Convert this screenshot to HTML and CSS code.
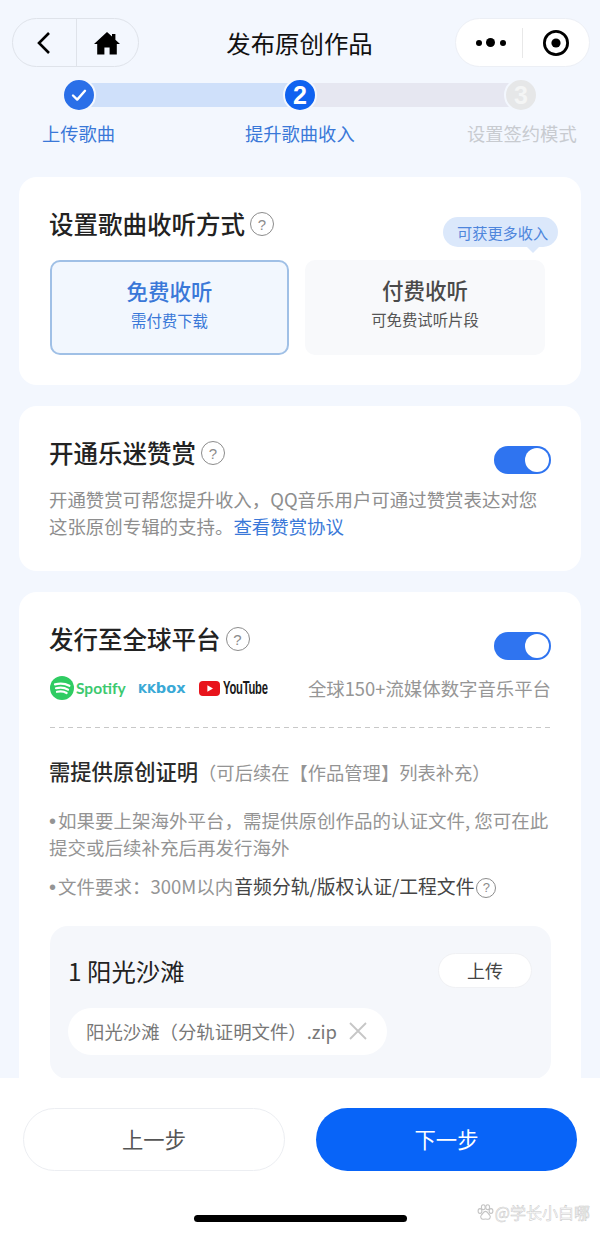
FILE: index.html
```html
<!DOCTYPE html>
<html lang="zh-CN">
<head>
<meta charset="utf-8">
<title>发布原创作品</title>
<link rel="stylesheet" href="styles.css">
</head>
<body>
<div class="screen">
  <div class="main">
    <header class="nav">
      <div class="capsule capsule-left">
        <button class="cap-btn cap-back" aria-label="返回">
          <svg width="16" height="24" viewBox="0 0 16 24"><path d="M13 2 L3 12 L13 22" fill="none" stroke="#000" stroke-width="2.6"/></svg>
        </button>
        <button class="cap-btn cap-home" aria-label="首页">
          <svg width="26" height="24" viewBox="0 0 26 24"><path d="M13 1 L18 5.6 V3 H21.4 V8.8 L26 13 H22.8 V23.5 H15.6 V16.5 H10.4 V23.5 H3.2 V13 H0 Z" fill="#000"/></svg>
        </button>
      </div>
      <h1 class="nav-title">发布原创作品</h1>
      <div class="capsule capsule-right">
        <span class="dots"><i class="dot"></i><i class="dot dot-big"></i><i class="dot"></i></span>
        <span class="cap-sep"></span>
        <svg width="28" height="28" viewBox="0 0 28 28"><circle cx="14" cy="14" r="11.6" fill="none" stroke="#000" stroke-width="2.8"/><circle cx="14" cy="14" r="4.6" fill="#000"/></svg>
      </div>
    </header>

    <section class="steps">
      <div class="track">
        <span class="bar bar-done"></span>
        <span class="bar bar-todo"></span>
        <span class="node node-blue node-1">
          <svg width="18" height="18" viewBox="0 0 18 18"><path d="M3 9.5 L7.2 13.6 L15 4.8" fill="none" stroke="#fff" stroke-width="2.4" stroke-linecap="round" stroke-linejoin="round"/></svg>
        </span>
        <span class="node node-blue node-2">2</span>
        <span class="node node-grey node-3">3</span>
      </div>
      <div class="step-labels">
        <span class="step-label step-on">上传歌曲</span>
        <span class="step-label step-on">提升歌曲收入</span>
        <span class="step-label step-off">设置签约模式</span>
      </div>
    </section>

    <section class="card card-listen">
      <div class="head">
        <h2 class="h2">设置歌曲收听方式</h2>
        <span class="help">?</span>
      </div>
      <span class="tip">可获更多收入</span>
      <div class="options">
        <div class="option option-on">
          <div class="opt-title">免费收听</div>
          <div class="opt-sub">需付费下载</div>
        </div>
        <div class="option option-off">
          <div class="opt-title">付费收听</div>
          <div class="opt-sub">可免费试听片段</div>
        </div>
      </div>
    </section>

    <section class="card card-tip">
      <div class="head-row">
        <div class="head">
          <h2 class="h2">开通乐迷赞赏</h2>
          <span class="help">?</span>
        </div>
        <span class="toggle"><i class="knob"></i></span>
      </div>
      <div class="desc">
        <div class="line">开通赞赏可帮您提升收入，QQ音乐用户可通过赞赏表达对您</div>
        <div class="line"><span>这张原创专辑的支持。</span><a class="link">查看赞赏协议</a></div>
      </div>
    </section>

    <section class="card card-global">
      <div class="head-row">
        <div class="head">
          <h2 class="h2">发行至全球平台</h2>
          <span class="help">?</span>
        </div>
        <span class="toggle"><i class="knob"></i></span>
      </div>
      <div class="platforms">
        <div class="logos">
          <span class="logo logo-spotify">
            <svg width="24" height="24" viewBox="0 0 24 24"><circle cx="12" cy="12" r="12" fill="#2fcc62"/><path d="M5 8.4 C10 7 15 7.4 19.4 9.8 M6 12.2 C10 11.1 14.6 11.5 18 13.6 M7 15.8 C10.4 15 13.8 15.3 16.6 17" fill="none" stroke="#fff" stroke-width="2.2" stroke-linecap="round"/></svg>
            <span class="spotify-word">Spotify</span>
          </span>
          <span class="logo logo-kkbox"><span class="kk">KK</span><span>box</span></span>
          <span class="logo logo-yt">
            <svg width="21" height="15" viewBox="0 0 24 17"><rect width="24" height="17" rx="4.5" fill="#e8141c"/><path d="M9.6 4.8 L16 8.5 L9.6 12.2 Z" fill="#fff"/></svg>
            <span class="yt-word">YouTube</span>
          </span>
        </div>
        <span class="platform-text">全球150+流媒体数字音乐平台</span>
      </div>
      <div class="dash"></div>
      <div class="proof-title"><strong>需提供原创证明</strong><span class="proof-note">（可后续在【作品管理】列表补充）</span></div>
      <div class="note note-first">
        <div class="line"><span class="bullet">•</span><span>如果要上架海外平台，需提供原创作品的认证文件, 您可在此</span></div>
        <div class="line">提交或后续补充后再发行海外</div>
      </div>
      <div class="note note-req"><span class="bullet">•</span><span>文件要求：300M以内</span><span class="note-dark">音频分轨/版权认证/工程文件</span><span class="help help-small">?</span></div>
      <div class="song">
        <div class="song-row">
          <span class="song-name">1 阳光沙滩</span>
          <span class="upload">上传</span>
        </div>
        <div class="file">
          <span class="file-name">阳光沙滩（分轨证明文件）.zip</span>
          <svg width="18" height="18" viewBox="0 0 18 18"><path d="M1 1 L17 17 M17 1 L1 17" stroke="#c6c6c6" stroke-width="1.8" fill="none"/></svg>
        </div>
      </div>
    </section>
  </div>

  <footer class="footer">
    <div class="actions">
      <button class="btn btn-prev">上一步</button>
      <button class="btn btn-next">下一步</button>
    </div>
    <div class="home-bar"></div>
    <span class="watermark">
      <svg width="17" height="17" viewBox="0 0 17 17"><g fill="#fff" stroke="#c4c4c4" stroke-width="1.1"><ellipse cx="3" cy="7" rx="1.9" ry="2.4"/><ellipse cx="6.3" cy="3.2" rx="1.9" ry="2.4"/><ellipse cx="10.7" cy="3.2" rx="1.9" ry="2.4"/><ellipse cx="14" cy="7" rx="1.9" ry="2.4"/><path d="M8.5 7.4 C6.6 7.4 5.8 9.6 4.4 11 C2.8 12.8 4.2 15.6 6.6 15.2 C7.8 15 9.2 15 10.4 15.2 C12.8 15.6 14.2 12.8 12.6 11 C11.2 9.6 10.4 7.4 8.5 7.4 Z"/></g></svg>
      <span class="wm-text">@学长小白哪</span>
    </span>
  </footer>
</div>
</body>
</html>
```
FILE: styles.css
```css
* { box-sizing: border-box; }
html, body { margin: 0; padding: 0; }
body {
  width: 600px;
  height: 1234px;
  overflow: hidden;
  font-family: "Noto Sans CJK SC", "Noto Sans", sans-serif;
  background: #f3f7fe;
  color: #1c1c1c;
}
.screen { display: flex; flex-direction: column; height: 1234px; }
.main { height: 1078px; overflow: hidden; padding: 18px 19px 0; flex: none; }

/* nav */
.nav { display: flex; align-items: center; justify-content: space-between; height: 49px; margin: 0 -9px 0 -7px; }
.capsule { display: flex; align-items: center; height: 49px; border-radius: 25px; }
.capsule-left { width: 127px; border: 1px solid #dfe3ea; }
.capsule-right { width: 135px; background: #fff; padding: 0 19px 0 20px; border: 1px solid #eceff5; }
.cap-btn { border: 0; background: none; padding: 0; height: 100%; display: flex; align-items: center; justify-content: center; }
.cap-back { width: 64px; border-right: 1px solid #dfe3ea; padding-right: 2px; }
.cap-home { flex: 1; padding-right: 1px; }
.nav-title { margin: 0 0 0 5px; font-size: 24.4px; font-weight: 400; line-height: 49px; color: #111; }
.dots { display: flex; align-items: center; gap: 4.5px; width: 30px; }
.dot { width: 6px; height: 6px; border-radius: 50%; background: #000; }
.dot-big { width: 9px; height: 9px; }
.cap-sep { width: 1px; height: 30px; background: #e8e8e8; margin: 0 19px 0 16px; }

/* steps */
.steps { margin: 0 -19px; height: 110px; padding-top: 11px; }
.track { position: relative; height: 34px; margin: 0 62px; }
.bar { position: absolute; top: 5px; height: 24px; }
.bar-done { left: 16px; width: 221px; background: #cfe0fa; }
.bar-todo { left: 237px; width: 221px; background: #e6e7f1; }
.node { position: absolute; top: 0; width: 34px; height: 34px; border-radius: 50%; border: 2px solid #f3f7fe; display: flex; align-items: center; justify-content: center; font-family: "Liberation Sans", sans-serif; font-size: 25px; font-weight: 700; color: #fff; }
.node-blue { background: #0f62f0; }
.node-1 { left: 0; background: #2a6fe8; }
.node-2 { left: 221px; }
.node-3 { left: 442px; background: #e6e7e8; color: #f4f5f5; }
.step-labels { position: relative; height: 34px; }
.step-label { position: absolute; top: 8px; font-size: 18.3px; line-height: 26px; white-space: nowrap; }
.step-label:nth-child(1) { left: 42px; }
.step-label:nth-child(2) { left: 245px; }
.step-label:nth-child(3) { left: 467px; }
.step-on { color: #3a78d8; }
.step-off { color: #c8cbd0; }

/* cards */
.card { position: relative; background: #fff; border-radius: 18px; padding: 29px 30px 0 31px; margin-bottom: 21px; }
.card-listen { height: 208px; }
.card-tip { height: 165px; }
.card-global { height: 560px; margin-bottom: 0; }
.head { display: flex; align-items: center; gap: 5px; height: 36px; margin-left: -1px; }
.h2 { margin: 0; font-size: 24.5px; font-weight: 500; line-height: 36px; color: #222; }
.help { flex: none; width: 24px; height: 24px; border-radius: 50%; border: 1.5px solid #8c8c8c; color: #8c8c8c; font-family: "Liberation Sans", sans-serif; font-size: 15px; display: inline-flex; align-items: center; justify-content: center; }
.help-small { width: 20px; height: 20px; font-size: 13px; vertical-align: 2px; margin-left: 2px; }
.tip { position: absolute; left: 424px; top: 40px; width: 115px; height: 30px; border-radius: 15px; background: #dbe8fb; color: #4f86dc; font-size: 15.2px; line-height: 30px; padding-left: 14px; white-space: nowrap; }
.tip::after { content: ""; position: absolute; left: 84px; top: 30px; border: 6px solid transparent; border-top-color: #dbe8fb; border-bottom: 0; }
.options { display: flex; gap: 16px; margin-top: 18px; }
.option { width: 240px; height: 95px; border-radius: 10px; display: flex; flex-direction: column; align-items: center; }
.option-on { width: 239px; background: #f2f7fe; border: 2px solid #a0c0e6; padding-top: 12px; color: #3a78d8; }
.option-off { background: #f8f9fb; color: #555; padding-top: 13px; }
.opt-title { font-size: 21.5px; line-height: 34px; font-weight: 500; }
.option-off .opt-title { color: #4a4a4a; }
.opt-sub { font-size: 15.4px; line-height: 22px; margin-top: 1px; }

.head-row { display: flex; justify-content: space-between; align-items: center; height: 36px; }
.toggle { width: 57px; height: 28px; border-radius: 14px; background: #2f74f0; padding: 2px; display: flex; justify-content: flex-end; margin-top: 14px; }
.knob { width: 24px; height: 24px; border-radius: 50%; background: #fff; }
.line { white-space: nowrap; }
.desc { margin: 15px 0 0 -1px; font-size: 18.45px; line-height: 27px; color: #8e8e8e; }
.link { color: #3a78d8; }

.platforms { display: flex; align-items: center; justify-content: space-between; margin-top: 18px; height: 26px; }
.logos { display: flex; align-items: center; }
.logo { display: flex; align-items: center; }
.logo-spotify { gap: 2px; }
.spotify-word { font-family: "Lato", sans-serif; font-weight: 700; font-size: 15.5px; color: #3cc96f; width: 50px; white-space: nowrap; }
.logo-kkbox { font-family: "DejaVu Sans", sans-serif; font-weight: 700; font-size: 14.5px; color: #3aa9d6; margin-left: 12px; align-items: baseline; }
.kk { font-size: 11.5px; }
.logo-yt { margin-left: 13px; gap: 3px; }
.yt-word { font-family: "Liberation Sans", sans-serif; font-weight: 700; font-size: 18px; color: #1a1a1a; transform: scaleX(0.625); transform-origin: left; width: 46px; letter-spacing: -0.4px; white-space: nowrap; }
.platform-text { font-size: 18.4px; line-height: 26px; color: #969696; white-space: nowrap; }
.dash { height: 1px; margin-top: 26px; background: repeating-linear-gradient(90deg, #c8c8c8 0 5px, transparent 5px 9px); }
.proof-title { margin: 28px 0 0 -1px; height: 30px; font-size: 18.3px; line-height: 30px; white-space: nowrap; }
.proof-title strong { font-weight: 500; font-size: 21.3px; line-height: 30px; color: #2a2a2a; }
.proof-note { color: #949494; line-height: 30px; }
.note { margin: 0 0 0 -1px; font-size: 18.5px; line-height: 26.6px; color: #949494; }
.bullet { display: inline-block; width: 9px; font-family: "Liberation Sans", sans-serif; font-size: 20px; line-height: 20px; }
.note-first { margin-top: 21px; }
.note-req { margin-top: 11.8px; white-space: nowrap; height: 28px; line-height: 28px; }
.note-dark { margin-left: 1px; font-size: 18.8px; color: #444; }
.song { margin-top: 26px; height: 153px; background: #f5f7fb; border-radius: 18px; padding: 27px 19px 0 18px; }
.song-row { display: flex; align-items: center; justify-content: space-between; height: 36px; }
.song-name { font-size: 24.4px; line-height: 36px; color: #222; }
.upload { width: 94px; height: 35px; border-radius: 18px; background: #fff; border: 1px solid #f0f1f4; font-size: 18px; line-height: 33px; text-align: center; color: #444; }
.file { display: inline-flex; align-items: center; gap: 12px; height: 47px; margin-top: 19px; padding: 0 20px 0 18px; background: #fff; border-radius: 24px; }
.file-name { font-size: 18.4px; color: #777; white-space: nowrap; }

/* footer */
.footer { position: relative; flex: 1; background: #fff; }
.actions { display: flex; gap: 31px; padding: 30px 23px 0; }
.btn { height: 63px; border-radius: 32px; font-family: inherit; font-size: 21.3px; padding: 0 0 2px; }
.btn-prev { width: 262px; background: #fff; border: 1px solid #eceef2; color: #555; }
.btn-next { width: 261px; background: #0864f8; border: 0; color: #fff; }
.home-bar { width: 213px; height: 7px; border-radius: 4px; background: #000; margin: 44px auto 0; }
.watermark { position: absolute; right: 10px; bottom: 12px; display: flex; align-items: center; gap: 1px; }
.wm-text { font-size: 16px; line-height: 20px; color: #fff; -webkit-text-stroke: 0.5px #c8c8c8; white-space: nowrap; }
```
